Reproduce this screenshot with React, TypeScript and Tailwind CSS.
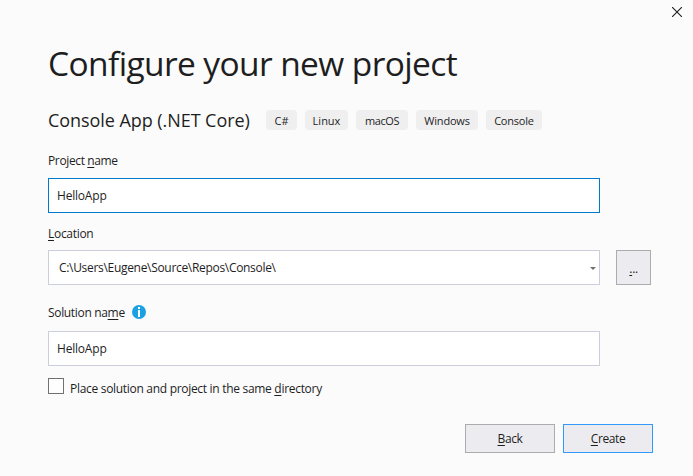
import type { ReactNode } from "react";

const tags = [
  { label: "C#", className: "w-[31px]" },
  { label: "Linux", className: "w-[43px]" },
  { label: "macOS", className: "w-[52px] tracking-[-0.4px]" },
  { label: "Windows", className: "w-[62px] tracking-[-0.2px]" },
  { label: "Console", className: "w-[56px] tracking-[-0.2px]" },
];

/* Access key letter, underlined just below the baseline. */
function Key({ children }: { children: ReactNode }) {
  return <span className="underline decoration-1 underline-offset-[1.5px]">{children}</span>;
}

function InfoIcon() {
  return (
    <svg className="mt-px h-[14px] w-[14px]" viewBox="0 0 14 14">
      <circle cx="7" cy="7" r="7" fill="#1ba1e2" />
      <path d="M6 2h2v2H6zM6 5h2v7H6z" fill="#fff" />
    </svg>
  );
}

export default function App() {
  return (
    <div className="flex h-[476px] w-[693px] flex-col overflow-hidden bg-[#fbfbfb] font-['Open_Sans','Noto_Sans',sans-serif] text-[12px] whitespace-nowrap text-[#1e1e1e]">
      <div className="flex h-[40px] shrink-0 justify-end pt-[7px] pr-[11px]">
        <svg className="h-[10px] w-[10px]" viewBox="0 0 10 10" fill="none" stroke="#1e1e1e" strokeWidth="1.1">
          <path d="M0 0l10 10M10 0L0 10" />
        </svg>
      </div>
      <main className="flex flex-col pl-[48px]">
        <h1 className="h-[66px] text-[33.5px] leading-[46px] tracking-[-0.61px]">Configure your new project</h1>
        <div className="flex h-[44px]">
          <h2 className="w-[218px] text-[18px] leading-[28px] tracking-[-0.06px]">Console App (.NET Core)</h2>
          <ul className="mt-[4px] flex gap-2">
            {tags.map((tag) => (
              <li
                key={tag.label}
                className={`h-[20px] rounded-[4px] bg-[#efeff0] text-center text-[11px] leading-[21px] ${tag.className}`}
              >
                {tag.label}
              </li>
            ))}
          </ul>
        </div>
        <label className="h-[28px] leading-[22px] tracking-[-0.37px]">
          Project <Key>n</Key>ame
        </label>
        <div className="h-[35px] w-[552px] border border-[#007acc] bg-white pl-[8px] leading-[34px] tracking-[-0.2px]">HelloApp</div>
        <label className="mt-[10px] h-[27px] leading-[22px] tracking-[-0.3px]">
          <Key>L</Key>ocation
        </label>
        <div className="flex gap-4">
          <div className="flex h-[35px] w-[552px] items-center justify-between border border-[#cccedb] bg-white pr-[3px] pl-[10px] tracking-[-0.31px]">
            <span>C:\Users\Eugene\Source\Repos\Console\</span>
            <svg className="mt-[2px] h-[3px] w-[6px]" viewBox="0 0 6 3">
              <path d="M0 0h6L3 3z" fill="#717171" />
            </svg>
          </div>
          <button className="h-[35px] w-[35px] border border-[#acacac] bg-[#ececf0] pt-[3px] tracking-[-0.4px]">
            <Key>.</Key>..
          </button>
        </div>
        <div className="mt-[19px] flex h-[27px]">
          <label className="w-[84px] leading-[18px] tracking-[-0.33px]">
            Solution na<Key>m</Key>e
          </label>
          <InfoIcon />
        </div>
        <div className="h-[35px] w-[552px] border border-[#cccedb] bg-white pl-[8px] leading-[34px] tracking-[-0.2px]">HelloApp</div>
        <label className="mt-[12px] flex h-[46px]">
          <span className="h-[16px] w-[16px] border border-[#717171] bg-[#fefefe]" />
          <span className="ml-[6px] leading-[22px] tracking-[-0.3px]">
            Place solution and project in the same <Key>d</Key>irectory
          </span>
        </label>
        <div className="ml-[417px] flex gap-2 tracking-[-0.4px]">
          <button className="h-[29px] w-[90px] border border-[#acacac] bg-[#ececf0]">
            <Key>B</Key>ack
          </button>
          <button className="h-[29px] w-[90px] border border-[#3399ff] bg-[#ececf0]">
            <Key>C</Key>reate
          </button>
        </div>
      </main>
    </div>
  );
}
